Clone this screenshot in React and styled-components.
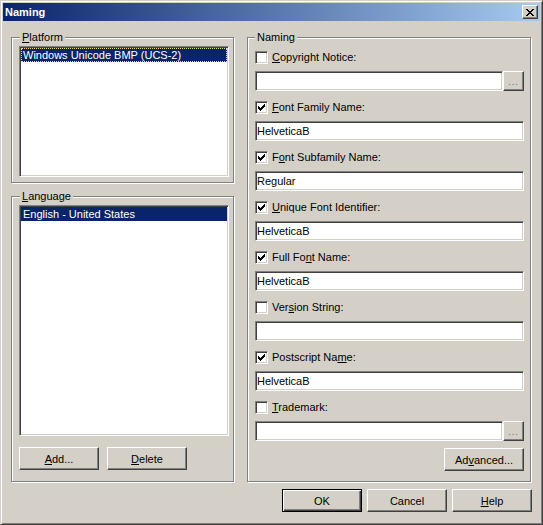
import React from 'react';
import styled, { createGlobalStyle, css } from 'styled-components';

const FACE = '#D4D0C8';
const SHADOW = '#808080';
const DARK = '#404040';

const GlobalStyle = createGlobalStyle`
  html, body {
    margin: 0;
    padding: 0;
    background: ${FACE};
  }
`;

const raised = css`
  border: 1px solid;
  border-color: #fff ${DARK} ${DARK} #fff;
  box-shadow: inset -1px -1px ${SHADOW}, inset 1px 1px ${FACE};
`;

const sunken = css`
  border: 1px solid;
  border-color: ${SHADOW} #fff #fff ${SHADOW};
  box-shadow: inset 1px 1px ${DARK}, inset -1px -1px ${FACE};
`;

const Window = styled.div`
  box-sizing: border-box;
  width: 543px;
  height: 525px;
  display: flex;
  flex-direction: column;
  padding: 2px;
  background: ${FACE};
  border: 1px solid;
  border-color: ${FACE} ${DARK} ${DARK} ${FACE};
  box-shadow: inset 1px 1px #fff, inset -1px -1px ${SHADOW};
  font: 11px 'Liberation Sans', Arial, sans-serif;
  color: #000;
`;

const TitleBar = styled.div`
  flex-shrink: 0;
  height: 18px;
  display: flex;
  align-items: center;
  padding: 0 2px;
  background: linear-gradient(to right, #0a246a, #a6caf0);
`;

const TitleText = styled.div`
  flex: 1;
  color: #fff;
  font-weight: bold;
  line-height: 18px;
`;

const CloseButton = styled.button`
  box-sizing: border-box;
  width: 16px;
  height: 14px;
  padding: 0;
  display: flex;
  align-items: center;
  justify-content: center;
  background: ${FACE};
  ${raised};
`;

const Body = styled.div`
  flex: 1;
  display: flex;
  flex-direction: column;
  padding: 16px 8px 0 8px;
`;

const Columns = styled.div`
  display: flex;
  gap: 13px;
  height: 445px;
`;

const LeftColumn = styled.div`
  width: 223px;
  display: flex;
  flex-direction: column;
  gap: 13px;
`;

const Group = styled.div`
  box-sizing: border-box;
  display: flex;
  flex-direction: column;
  width: ${({ $width }) => $width || 'auto'};
  height: ${({ $height }) => $height};
  padding: ${({ $pad }) => $pad};
  border: 1px solid ${SHADOW};
  box-shadow: 1px 1px 0 #fff, inset 1px 1px 0 #fff;
`;

const GroupTitle = styled.div`
  align-self: flex-start;
  margin: -7px 0 0 ${({ $indent }) => $indent || 0}px;
  padding: 0 2px;
  line-height: 13px;
  background: ${FACE};
`;

const ListBox = styled.ul`
  flex: 1;
  margin: 2px 0 0;
  padding: 1px;
  list-style: none;
  background: #fff;
  ${sunken};
`;

const ListItem = styled.li`
  box-sizing: border-box;
  height: 14px;
  line-height: 12px;
  padding: 0 1px;
  color: ${({ $selected }) => ($selected ? '#fff' : '#000')};
  background: ${({ $selected }) => ($selected ? '#0a246a' : 'transparent')};
  border: 1px ${({ $focused }) => ($focused ? 'dotted #e8d890' : 'solid transparent')};
  white-space: nowrap;
`;

const ButtonRow = styled.div`
  display: flex;
  justify-content: ${({ $end }) => ($end ? 'flex-end' : 'flex-start')};
  gap: ${({ $gap }) => $gap}px;
  margin-top: ${({ $top }) => $top}px;
`;

const Button = styled.button`
  box-sizing: border-box;
  width: 80px;
  height: 23px;
  padding: 0;
  font: inherit;
  color: #000;
  background: ${FACE};
  ${raised};
  ${({ $default }) =>
    $default &&
    css`
      border: 1px solid #000;
      box-shadow: inset 1px 1px #fff, inset -1px -1px ${DARK}, inset -2px -2px ${SHADOW};
    `}
`;

const AdvancedButton = styled(Button)`
  align-self: flex-end;
  margin-top: 7px;
`;

const CheckRow = styled.label`
  display: flex;
  align-items: center;
  height: 13px;
  margin-top: ${({ $first }) => ($first ? 7 : 10)}px;
  gap: 4px;
  line-height: 13px;
`;

const CheckBox = styled.span`
  box-sizing: border-box;
  width: 13px;
  height: 13px;
  flex-shrink: 0;
  display: flex;
  align-items: center;
  justify-content: center;
  background: #fff;
  ${sunken};
`;

const FieldLine = styled.div`
  display: flex;
  margin-top: 7px;
  height: 20px;
`;

const TextField = styled.input`
  box-sizing: border-box;
  flex: 1;
  min-width: 0;
  height: 20px;
  margin: 0;
  padding: 0 1px;
  font: inherit;
  color: #000;
  background: #fff;
  outline: none;
  ${sunken};
`;

const BrowseButton = styled.button`
  box-sizing: border-box;
  width: 21px;
  height: 20px;
  padding: 0 0 3px;
  display: flex;
  align-items: flex-end;
  justify-content: center;
  font: 9px 'Liberation Sans', Arial, sans-serif;
  letter-spacing: 1px;
  color: #666;
  background: ${FACE};
  ${raised};
`;

const Key = styled.span`
  text-decoration: underline;
`;

const mnemonic = (text, at) =>
  at == null ? (
    text
  ) : (
    <>
      {text.slice(0, at)}
      <Key>{text[at]}</Key>
      {text.slice(at + 1)}
    </>
  );

// classic 7x7 tick, one column of three pixels at a time
const tickCols = [2, 3, 4, 3, 2, 1, 0];

const Tick = () => (
  <svg width="7" height="7" viewBox="0 0 7 7" shapeRendering="crispEdges">
    {tickCols.map((y, x) => (
      <rect key={x} x={x} y={y} width="1" height="3" fill="#000" />
    ))}
  </svg>
);

const CloseGlyph = () => (
  <svg width="8" height="7" viewBox="0 0 8 7" shapeRendering="crispEdges">
    {[0, 1, 2, 3, 4, 5, 6].map((y) => {
      const x = y <= 3 ? y : 6 - y;
      return (
        <g key={y} fill="#000">
          <rect x={x} y={y} width="2" height="1" />
          <rect x={6 - x} y={y} width="2" height="1" />
        </g>
      );
    })}
  </svg>
);

const nameFields = [
  { label: 'Copyright Notice:', at: 0, checked: false, value: '', browse: true },
  { label: 'Font Family Name:', at: 0, checked: true, value: 'HelveticaB' },
  { label: 'Font Subfamily Name:', at: 1, checked: true, value: 'Regular' },
  { label: 'Unique Font Identifier:', at: 0, checked: true, value: 'HelveticaB' },
  { label: 'Full Font Name:', at: 7, checked: true, value: 'HelveticaB' },
  { label: 'Version String:', at: 3, checked: false, value: '' },
  { label: 'Postscript Name:', at: 13, checked: true, value: 'HelveticaB' },
  { label: 'Trademark:', at: 0, checked: false, value: '', browse: true },
];

const NameField = ({ field, first }) => (
  <>
    <CheckRow $first={first}>
      <CheckBox>{field.checked && <Tick />}</CheckBox>
      <span>{mnemonic(field.label, field.at)}</span>
    </CheckRow>
    <FieldLine>
      <TextField readOnly value={field.value} />
      {field.browse && <BrowseButton>...</BrowseButton>}
    </FieldLine>
  </>
);

const App = () => {
  return (
    <>
      <GlobalStyle />
      <Window>
        <TitleBar>
          <TitleText>Naming</TitleText>
          <CloseButton>
            <CloseGlyph />
          </CloseButton>
        </TitleBar>

        <Body>
          <Columns>
            <LeftColumn>
              <Group $height="146px" $pad="0 4px 5px 7px">
                <GroupTitle $indent={1}>{mnemonic('Platform', 0)}</GroupTitle>
                <ListBox>
                  <ListItem $selected $focused>
                    Windows Unicode BMP (UCS-2)
                  </ListItem>
                </ListBox>
              </Group>

              <Group $height="286px" $pad="0 4px 11px 7px">
                <GroupTitle $indent={1}>{mnemonic('Language', 0)}</GroupTitle>
                <ListBox>
                  <ListItem $selected>English - United States</ListItem>
                </ListBox>
                <ButtonRow $gap={8} $top={11}>
                  <Button>{mnemonic('Add...', 0)}</Button>
                  <Button>{mnemonic('Delete', 0)}</Button>
                </ButtonRow>
              </Group>
            </LeftColumn>

            <Group $width="284px" $height="445px" $pad="0 6px 0 7px">
              <GroupTitle>Naming</GroupTitle>
              {nameFields.map((f, i) => (
                <NameField key={f.label} field={f} first={i === 0} />
              ))}
              <AdvancedButton>{mnemonic('Advanced...', 2)}</AdvancedButton>
            </Group>
          </Columns>

          <ButtonRow $end $gap={5} $top={7}>
            <Button $default>OK</Button>
            <Button>Cancel</Button>
            <Button>{mnemonic('Help', 0)}</Button>
          </ButtonRow>
        </Body>
      </Window>
    </>
  );
};

export default App;
